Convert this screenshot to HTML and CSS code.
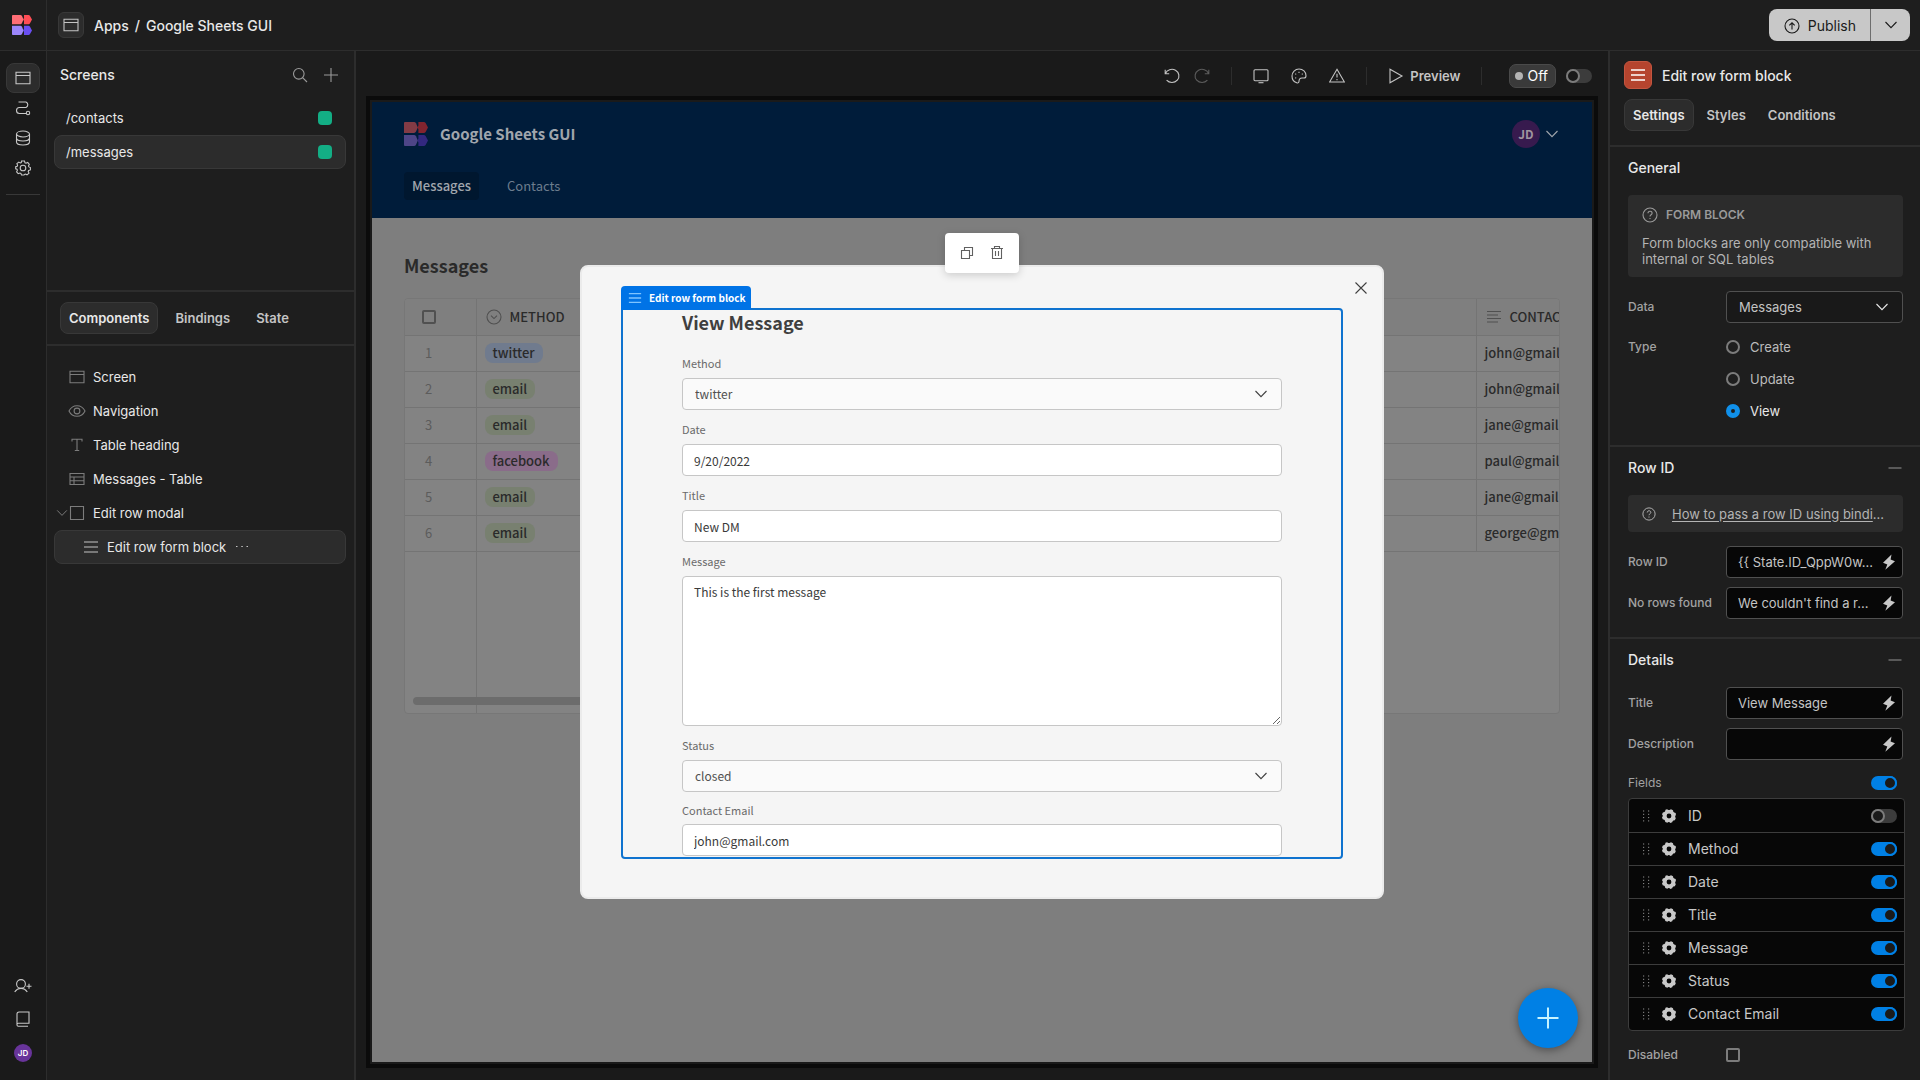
FILE: index.html
```html
<!DOCTYPE html>
<html lang="en">
<head>
<meta charset="utf-8">
<title>Google Sheets GUI</title>
<link rel="stylesheet" href="styles.css">
</head>
<body>
<svg class="sprite" aria-hidden="true">
  <symbol id="logo" viewBox="0 0 20 20">
    <path fill="var(--logo-a)" d="M0 .8Q0 0 .8 0H8.4Q9.400 0 10 1L11.500 4.500 10 8Q9.400 9.200 8.400 9.200H0z"/>
    <path fill="var(--logo-b)" d="M12 0H16.500Q17.500 0 18 .9L20 4.500 18 8.300Q17.500 9.200 16.500 9.200H12L12 6 11.200 4.500 12 3z"/>
    <path fill="var(--logo-c)" d="M0 10.800H8.400Q9.400 10.800 10 11.800L11.500 15.400 10 19Q9.400 20 8.400 20H.8Q0 20 0 19.200z"/>
    <path fill="var(--logo-d)" d="M12 10.800H16.500Q17.500 10.800 18 11.700L20 15.400 18 19.100Q17.500 20 16.500 20H12L12 17 11.200 15.400 12 13.800z"/>
  </symbol>
  <symbol id="window" viewBox="0 0 16 16"><path d="M1 2.300h14v11.500H1zM1 5.500h14"/></symbol>
  <symbol id="path" viewBox="0 0 16 16"><path d="M3.500 2H11a3 3 0 0 1 0 5.500H4.500a3 3 0 0 0 0 6H11"/><circle cx="13" cy="13" r="1.700"/></symbol>
  <symbol id="database" viewBox="0 0 16 16"><ellipse cx="8" cy="4" rx="6.500" ry="3"/><path d="M1.500 4v8c0 1.700 2.900 3 6.500 3s6.500-1.300 6.500-3V4M1.500 8c0 1.700 2.900 3 6.500 3s6.500-1.300 6.500-3"/></symbol>
  <symbol id="gear" viewBox="0 0 16 16"><circle cx="8" cy="8" r="2.800"/><path d="M6.500 1h3l.5 1.800 1 .4 1.700-.8 1.600 2-.8 1.500.4 1 1.500.6v2.400l-1.800.6-.4 1 .8 1.600-2 1.700-1.500-.8-1 .4L9 15H6.500l-.6-1.600-1-.4-1.700.7-1.600-1.900.8-1.600-.4-1L.7 8.800V6.700l1.500-.5.4-1L1.900 3.700l1.900-1.600 1.500.8 1-.4z"/></symbol>
  <symbol id="user-plus" viewBox="0 0 18 16"><circle cx="7" cy="6" r="4.400"/><path d="M.7 14C2 12 4 10.400 7 10.400s5 1.600 6.300 3.600M15 5.700v5M12.500 8.200h5"/></symbol>
  <symbol id="book" viewBox="0 0 16 16"><path d="M2 14.200V3a2 2 0 0 1 2-2h10v11.200H3.500A1.500 1.500 0 0 0 2 14a1.300 1.300 0 0 0 1.300 1.200H13"/></symbol>
  <symbol id="search" viewBox="0 0 16 16"><circle cx="6.800" cy="6.800" r="5.300"/><path d="M10.600 10.600 15 15"/></symbol>
  <symbol id="plus" viewBox="0 0 16 16"><path d="M8 1v14M1 8h14"/></symbol>
  <symbol id="eye" viewBox="0 0 18 16"><path d="M1 8c1.600-3.300 4.500-5.300 8-5.300S15.400 4.700 17 8c-1.600 3.300-4.500 5.300-8 5.300S2.600 11.300 1 8z"/><circle cx="9" cy="8" r="2.900"/></symbol>
  <symbol id="text" viewBox="0 0 16 16"><path d="M3 4.500V2.200h10v2.300M8 2.200v11.300M5.800 13.500h4.400"/></symbol>
  <symbol id="table" viewBox="0 0 16 16"><path d="M1 2.500h14v11H1zM1 6h14M1 9.800h14M5 6v7.500"/></symbol>
  <symbol id="box" viewBox="0 0 16 16"><path d="M1.500 1.500h13v13h-13z"/></symbol>
  <symbol id="lines" viewBox="0 0 16 16"><path d="M1 3h14M1 8h14M1 13h14"/></symbol>
  <symbol id="chevron" viewBox="0 0 16 16"><path d="M2.500 5 8 10.700 13.500 5"/></symbol>
  <symbol id="dots" viewBox="0 0 16 16"><path d="M2 7.500h1.500M7.300 7.500h1.500M12.500 7.500H14"/></symbol>
  <symbol id="undo" viewBox="0 0 16 16"><path d="M1.200 1.800v4h4M1.400 5.600a7 6.600 0 1 1 1.200 6.600"/></symbol>
  <symbol id="redo" viewBox="0 0 16 16"><path d="M14.800 1.800v4h-4M14.600 5.600a7 6.600 0 1 0-1.200 6.600"/></symbol>
  <symbol id="desktop" viewBox="0 0 16 16"><rect x="1" y="1.700" width="14" height="11" rx="1"/><path d="M5.500 14.700h5"/></symbol>
  <symbol id="palette" viewBox="0 0 16 16"><path d="M8 1a7 7 0 0 0-7 7c0 3.500 2.300 6 4.700 6.800 1.500.5 2.300-.5 2.300-1.500 0-2.200 1-3.300 3-3.300h2c1.300 0 2-.9 2-2.300C15 4 12 1 8 1z"/><path d="M8 3.700v1.200M4.300 5.800l.9.600M4.300 10.200l.9-.6M10.800 6.400l.9-.6"/></symbol>
  <symbol id="warning" viewBox="0 0 16 16"><path d="M8 1.300 15.400 14H.6zM8 5.800v3.700M8 11v1.200"/></symbol>
  <symbol id="play" viewBox="0 0 16 16"><path d="M2 1.200v13.600L14 8z"/></symbol>
  <symbol id="up-circle" viewBox="0 0 16 16"><circle cx="8" cy="8" r="7"/><path d="M8 11.500V5M5.300 7.400 8 4.800l2.700 2.600"/></symbol>
  <symbol id="help" viewBox="0 0 16 16"><circle cx="8" cy="8" r="7"/><path d="M6 6.300C6 3.600 10.100 3.700 10.100 6.200 10.100 7.800 8 7.700 8 9.400M8 10.900v1.200"/></symbol>
  <symbol id="minus" viewBox="0 0 16 16"><path d="M1.500 8h13"/></symbol>
  <symbol id="bolt" viewBox="0 0 12 16"><path d="M8.500.5 0 8.800l4.300 1.700L2.300 15.700 12 7.300 7.600 5.600z"/></symbol>
  <symbol id="grip" viewBox="0 0 8 12"><path d="M1 1h1.200M6 1h1.200M1 4.300h1.200M6 4.300h1.200M1 7.600h1.200M6 7.600h1.200M1 10.900h1.200M6 10.900h1.200"/></symbol>
  <symbol id="gear-solid" viewBox="0 0 14 14"><path fill-rule="evenodd" d="M5 .3 6.500 1h1L9 .3l2 .9.300 1.500.9.900 1.500.5.200 2-.7 1v.8l.6 1.300-1 2-1.400.2-.8.8L10.200 13.200 8.200 13.900 7.300 13h-.8l-1.200.8-2-.8-.4-1.500-.7-.7L.7 10.200 0 8.300l.8-1v-.7L0 5.300l.9-1.900 1.500-.4.7-.7L3.500.8zM7 4.600a2.400 2.400 0 1 0 0 4.800 2.400 2.400 0 0 0 0-4.800z"/></symbol>
  <symbol id="down-circle" viewBox="0 0 16 16"><circle cx="8" cy="8" r="7"/><path d="M5 6.700 8 9.600l3-2.900"/></symbol>
  <symbol id="align" viewBox="0 0 16 16"><path d="M1 2.500h14M1 6h11M1 9.500h14M1 13h11"/></symbol>
  <symbol id="copy" viewBox="0 0 14 14"><path d="M1.500 4.500h8v8h-8zM4.500 4.500v-3h8v8h-3"/></symbol>
  <symbol id="trash" viewBox="0 0 14 14"><path d="M1 2.500h12M2.500 2.500v10h9v-10M4.500 2.500V.5h5v2M5.500 5v5M8.500 5v5"/></symbol>
  <symbol id="close" viewBox="0 0 14 14"><path d="M1.500 1.500l11 11M12.500 1.500l-11 11"/></symbol>
</svg>

<header class="topbar">
  <a class="brand" href="#" aria-label="Home"><svg class="logo"><use href="#logo"/></svg></a>
  <nav class="crumbs">
    <span class="crumb-icon"><svg class="icon"><use href="#window"/></svg></span>
    <a href="#">Apps</a><span>/</span><a href="#">Google Sheets GUI</a>
  </nav>
  <div class="publish">
    <button class="publish-main"><svg class="icon"><use href="#up-circle"/></svg>Publish</button>
    <button class="publish-more" aria-label="More publish options"><svg class="icon"><use href="#chevron"/></svg></button>
  </div>
</header>

<div class="workspace">
  <nav class="rail">
    <button class="rail-item active" aria-label="Design"><svg class="icon"><use href="#window"/></svg></button>
    <button class="rail-item" aria-label="Automation"><svg class="icon"><use href="#path"/></svg></button>
    <button class="rail-item" aria-label="Data"><svg class="icon"><use href="#database"/></svg></button>
    <button class="rail-item" aria-label="Settings"><svg class="icon"><use href="#gear"/></svg></button>
    <hr class="rail-line">
    <div class="rail-foot">
      <button aria-label="Invite user"><svg class="icon wide"><use href="#user-plus"/></svg></button>
      <button aria-label="Docs"><svg class="icon"><use href="#book"/></svg></button>
      <span class="avatar small">JD</span>
    </div>
  </nav>

  <aside class="left">
    <section class="screens">
      <div class="screens-head">
        <h2>Screens</h2>
        <button aria-label="Search screens"><svg class="icon"><use href="#search"/></svg></button>
        <button aria-label="Add screen"><svg class="icon"><use href="#plus"/></svg></button>
      </div>
      <ul class="list">
        <li class="row"><a href="#">/contacts</a><i class="swatch"></i></li>
        <li class="row selected"><a href="#">/messages</a><i class="swatch"></i></li>
      </ul>
    </section>
    <div class="tabs left-tabs">
      <button class="tab active">Components</button><button class="tab">Bindings</button><button class="tab">State</button>
    </div>
    <ul class="list tree">
      <li class="row"><svg class="icon"><use href="#window"/></svg>Screen</li>
      <li class="row"><svg class="icon wide"><use href="#eye"/></svg>Navigation</li>
      <li class="row"><svg class="icon"><use href="#text"/></svg>Table heading</li>
      <li class="row"><svg class="icon"><use href="#table"/></svg>Messages - Table</li>
      <li class="row open"><svg class="icon caret"><use href="#chevron"/></svg><svg class="icon"><use href="#box"/></svg>Edit row modal</li>
      <li class="row child selected"><svg class="icon"><use href="#lines"/></svg>Edit row form block<svg class="icon more"><use href="#dots"/></svg></li>
    </ul>
  </aside>

  <main class="center">
    <div class="toolbar">
      <button aria-label="Undo"><svg class="icon"><use href="#undo"/></svg></button>
      <button class="off" aria-label="Redo"><svg class="icon"><use href="#redo"/></svg></button>
      <i class="sep"></i>
      <div class="tools">
        <button aria-label="Desktop"><svg class="icon"><use href="#desktop"/></svg></button>
        <button aria-label="Theme"><svg class="icon"><use href="#palette"/></svg></button>
        <button aria-label="Errors"><svg class="icon"><use href="#warning"/></svg></button>
      </div>
      <i class="sep"></i>
      <button class="preview-btn"><svg class="icon"><use href="#play"/></svg>Preview</button>
      <i class="sep last"></i>
      <label class="badge" for="live">Off</label>
      <input id="live" type="checkbox" class="switch">
    </div>

    <div class="canvas">
      <div class="app-nav">
        <div class="app-head">
          <svg class="logo"><use href="#logo"/></svg>
          <strong>Google Sheets GUI</strong>
          <span class="avatar">JD</span>
          <svg class="icon"><use href="#chevron"/></svg>
        </div>
        <nav class="app-links"><a class="current" href="#">Messages</a><a href="#">Contacts</a></nav>
      </div>
      <div class="app-body">
        <h1>Messages</h1>
        <div class="grid">
          <table>
            <colgroup><col class="c-num"><col><col><col><col><col><col></colgroup>
            <thead><tr>
              <th><input type="checkbox" class="tick" aria-label="Select all"></th>
              <th><span class="th"><svg class="icon"><use href="#down-circle"/></svg>METHOD</span></th>
              <th></th><th></th><th></th><th></th>
              <th><span class="th"><svg class="icon"><use href="#align"/></svg>CONTACT</span></th>
            </tr></thead>
            <tbody>
              <tr><td>1</td><td><span class="pill blue">twitter</span></td><td></td><td></td><td></td><td></td><td>john@gmail.com</td></tr>
              <tr><td>2</td><td><span class="pill">email</span></td><td></td><td></td><td></td><td></td><td>john@gmail.com</td></tr>
              <tr><td>3</td><td><span class="pill">email</span></td><td></td><td></td><td></td><td></td><td>jane@gmail.com</td></tr>
              <tr><td>4</td><td><span class="pill pink">facebook</span></td><td></td><td></td><td></td><td></td><td>paul@gmail.com</td></tr>
              <tr><td>5</td><td><span class="pill">email</span></td><td></td><td></td><td></td><td></td><td>jane@gmail.com</td></tr>
              <tr><td>6</td><td><span class="pill">email</span></td><td></td><td></td><td></td><td></td><td>george@gmail.com</td></tr>
            </tbody>
          </table>
          <div class="grid-rest"><i class="scrollbar"></i></div>
        </div>
      </div>

      <div class="modal-layer">
        <div class="modal" role="dialog" aria-label="View Message">
          <button class="close" aria-label="Close"><svg class="icon"><use href="#close"/></svg></button>
          <div class="float-tools">
            <button aria-label="Duplicate"><svg class="icon"><use href="#copy"/></svg></button>
            <button aria-label="Delete"><svg class="icon"><use href="#trash"/></svg></button>
          </div>
          <div class="block">
            <span class="block-tag"><svg class="icon"><use href="#lines"/></svg>Edit row form block</span>
            <form class="form">
              <h2>View Message</h2>
              <label for="method">Method</label>
              <span class="pick"><select id="method"><option>twitter</option></select><svg class="icon"><use href="#chevron"/></svg></span>
              <label for="date">Date</label>
              <input id="date" type="text" value="9/20/2022">
              <label for="title">Title</label>
              <input id="title" type="text" value="New DM">
              <label for="message">Message</label>
              <textarea id="message">This is the first message</textarea>
              <label for="status">Status</label>
              <span class="pick"><select id="status"><option>closed</option></select><svg class="icon"><use href="#chevron"/></svg></span>
              <label for="email">Contact Email</label>
              <input id="email" type="text" value="john@gmail.com">
            </form>
          </div>
        </div>
      </div>
      <button class="fab" aria-label="Add component"><svg class="icon"><use href="#plus"/></svg></button>
    </div>
  </main>

  <aside class="right">
    <div class="right-head">
      <div class="right-title"><span class="type-icon"><svg class="icon"><use href="#lines"/></svg></span><h2>Edit row form block</h2></div>
      <div class="tabs"><button class="tab active">Settings</button><button class="tab">Styles</button><button class="tab">Conditions</button></div>
    </div>

    <section class="group">
      <div class="group-head"><h3>General</h3></div>
      <div class="info">
        <h4><svg class="icon"><use href="#help"/></svg>FORM BLOCK</h4>
        <p>Form blocks are only compatible with internal or SQL tables</p>
      </div>
      <div class="prop"><label for="data">Data</label>
        <span class="pick"><select id="data"><option>Messages</option></select><svg class="icon"><use href="#chevron"/></svg></span></div>
      <div class="prop top" role="radiogroup" aria-labelledby="type-label"><span class="name" id="type-label">Type</span>
        <div class="radios">
          <label><input type="radio" name="type">Create</label>
          <label><input type="radio" name="type">Update</label>
          <label class="on"><input type="radio" name="type" checked>View</label>
        </div></div>
    </section>

    <section class="group">
      <div class="group-head"><h3>Row ID</h3><svg class="icon"><use href="#minus"/></svg></div>
      <div class="info tip"><svg class="icon"><use href="#help"/></svg><a href="#">How to pass a row ID using bindi</a>...</div>
      <div class="prop"><label for="rowid">Row ID</label>
        <span class="bind"><input id="rowid" type="text" value="{{ State.ID_QppW0w..."><svg class="icon"><use href="#bolt"/></svg></span></div>
      <div class="prop"><label for="norows">No rows found</label>
        <span class="bind"><input id="norows" type="text" value="We couldn't find a r..."><svg class="icon"><use href="#bolt"/></svg></span></div>
    </section>

    <section class="group">
      <div class="group-head"><h3>Details</h3><svg class="icon"><use href="#minus"/></svg></div>
      <div class="prop"><label for="ptitle">Title</label>
        <span class="bind"><input id="ptitle" type="text" value="View Message"><svg class="icon"><use href="#bolt"/></svg></span></div>
      <div class="prop"><label for="pdesc">Description</label>
        <span class="bind"><input id="pdesc" type="text"><svg class="icon"><use href="#bolt"/></svg></span></div>
      <div class="fields-head"><label for="allfields">Fields</label><input id="allfields" type="checkbox" class="switch" checked></div>
      <ul class="fields">
        <li><svg class="grip"><use href="#grip"/></svg><svg class="cog"><use href="#gear-solid"/></svg><label for="f1">ID</label><input id="f1" type="checkbox" class="switch"></li>
        <li><svg class="grip"><use href="#grip"/></svg><svg class="cog"><use href="#gear-solid"/></svg><label for="f2">Method</label><input id="f2" type="checkbox" class="switch" checked></li>
        <li><svg class="grip"><use href="#grip"/></svg><svg class="cog"><use href="#gear-solid"/></svg><label for="f3">Date</label><input id="f3" type="checkbox" class="switch" checked></li>
        <li><svg class="grip"><use href="#grip"/></svg><svg class="cog"><use href="#gear-solid"/></svg><label for="f4">Title</label><input id="f4" type="checkbox" class="switch" checked></li>
        <li><svg class="grip"><use href="#grip"/></svg><svg class="cog"><use href="#gear-solid"/></svg><label for="f5">Message</label><input id="f5" type="checkbox" class="switch" checked></li>
        <li><svg class="grip"><use href="#grip"/></svg><svg class="cog"><use href="#gear-solid"/></svg><label for="f6">Status</label><input id="f6" type="checkbox" class="switch" checked></li>
        <li><svg class="grip"><use href="#grip"/></svg><svg class="cog"><use href="#gear-solid"/></svg><label for="f7">Contact Email</label><input id="f7" type="checkbox" class="switch" checked></li>
      </ul>
      <div class="prop"><label for="disabled">Disabled</label><input id="disabled" type="checkbox" class="tick"></div>
    </section>
  </aside>
</div>
</body>
</html>
```
FILE: styles.css
```css
:root {
  --bg: #1e1e1e;
  --bg-deep: #1a1a1a;
  --line: #2d2d2d;
  --raised: #2c2c2c;
  --raised-line: #383838;
  --text: #e8e8e8;
  --muted: #c4c4c4;
  --label: #a2a2a2;
  --blue: #0080e5;
  --logo-a: #ff6e76;
  --logo-b: #ff4d55;
  --logo-c: #9c86fb;
  --logo-d: #6a4ff3;
}

*, *::before { box-sizing: border-box; }

body {
  margin: 0;
  height: 100vh;
  display: flex;
  flex-direction: column;
  overflow: hidden;
  background: var(--bg);
  color: var(--text);
  font: 400 14px/20px Inter, "Liberation Sans", sans-serif;
}

h1, h2, h3, h4, p, ul { margin: 0; padding: 0; list-style: none; font-weight: 500; font-size: 14px; }
a { color: inherit; text-decoration: none; }
button { margin: 0; padding: 0; border: 0; background: none; color: inherit; font: inherit; display: flex; align-items: center; justify-content: center; }
input, select, textarea { margin: 0; font: inherit; color: inherit; }

.sprite { position: absolute; width: 0; height: 0; }
.icon { width: 16px; height: 16px; flex: none; fill: none; stroke: currentColor; stroke-width: 1.100; }
.icon.wide { width: 18px; }

/* top bar */
.topbar { display: flex; align-items: center; height: 51px; flex: none; border-bottom: 1px solid var(--line); padding-right: 10px; }
.brand { width: 47px; height: 50px; padding-left: 12px; display: flex; align-items: center; border-right: 1px solid var(--line); }
.logo { width: 20px; height: 20px; flex: none; }
.crumbs { display: flex; align-items: center; gap: 6px; flex: 1; padding-left: 11px; font-weight: 500; line-height: 22px; }
.crumbs > :not(.crumb-icon) { padding-top: 2px; }
.crumb-icon { width: 26px; height: 26px; margin-right: 4px; display: grid; place-items: center; border: 1px solid var(--raised-line); border-radius: 6px; background: var(--raised); color: var(--muted); }
.publish { display: flex; height: 32px; border-radius: 8px; overflow: hidden; background: #c8c8c8; color: #1a1a1a; }
.publish-main { gap: 8px; padding: 1px 14px 0 15px; border-right: 1px solid #6e6e6e; }
.publish-more { width: 39px; }

.workspace { flex: 1; min-height: 0; display: flex; }

/* icon rail */
.rail { width: 47px; flex: none; display: flex; flex-direction: column; align-items: center; padding: 12px 0 18px; background: var(--bg-deep); border-right: 1px solid var(--line); color: #c8c8c8; }
.rail-item { width: 34px; height: 30px; border: 1px solid transparent; border-radius: 8px; }
.rail-item.active { background: var(--raised); border-color: var(--raised-line); }
.rail-line { width: 34px; margin: 11px 0 0; border: 0; border-top: 1px solid var(--raised-line); }
.rail-foot { margin-top: auto; display: flex; flex-direction: column; align-items: center; gap: 17px; }
.avatar { width: 28px; height: 28px; border-radius: 50%; display: grid; place-items: center; background: #371a4e; color: #a0949f; font: 700 12px/20px "Noto Sans CJK SC", sans-serif; }
.avatar.small { width: 18px; height: 18px; background: #68349a; color: #fff; font: 600 8px/18px Inter, sans-serif; }

/* left panel */
.left { width: 309px; flex: none; border-right: 2px solid var(--line); }
.screens { height: 241px; border-bottom: 2px solid var(--line); }
.screens-head { display: flex; align-items: center; gap: 15px; padding: 14px 15px 10px 13px; color: #9a9a9a; }
.screens-head h2 { flex: 1; color: var(--text); }
.list { padding: 6px 8px 6px 7px; font-size: 13px; font-weight: 400; }
.row { height: 34px; display: flex; align-items: center; gap: 8px; padding: 0 13px 0 11px; border: 1px solid transparent; border-radius: 8px; }
.row.selected { background: var(--raised); border-color: var(--raised-line); }
.row a { flex: 1; }
.swatch { width: 14px; height: 14px; border-radius: 4px; background: #13ae85; }
.tabs { display: flex; gap: 4px; }
.left-tabs { gap: 8px; padding: 10px 13px; border-bottom: 2px solid var(--line); }
.tab { height: 32px; padding: 0 8px; border: 1px solid transparent; border-radius: 8px; font-size: 13px; font-weight: 600; color: var(--muted); }
.tab.active { background: var(--raised); border-color: var(--raised-line); color: var(--text); }
.tree { padding-top: 14px; }
.tree .row { padding-left: 14px; }
.tree .row.open { padding-left: 0; gap: 0; }
.tree .row.open .icon + .icon { margin-right: 8px; }
.tree .row.child { padding-left: 28px; }
.tree .icon { color: #7c7c7c; }
.tree .icon.caret { width: 14px; }
.tree .wide { margin: 0 -1px; }
.tree .child .icon { color: var(--muted); }

/* centre */
.center { flex: 1; min-width: 0; display: flex; flex-direction: column; padding: 0 10px 12px; background: var(--bg-deep); }
.toolbar { height: 45px; padding: 5px 6px 0 0; display: flex; align-items: center; justify-content: flex-end; gap: 14px; color: var(--muted); }
.toolbar .off { color: #5c5c5c; }
.sep { width: 1px; height: 18px; background: var(--line); margin: 0 7px; }
.sep.last { margin-right: 13px; }
.tools { display: flex; gap: 22px; }
.preview-btn { gap: 6px; font-size: 13px; font-weight: 600; }
.badge { height: 24px; padding: 0 7px 0 5px; display: flex; align-items: center; gap: 4px; border: 1px solid #4a4a4a; border-radius: 7px; background: #3a3a3a; color: #fff; }
.badge::before { content: ""; width: 8px; height: 8px; border-radius: 50%; background: #b4b4b4; }
.badge + .switch { margin-left: -4px; }

.switch { appearance: none; width: 26px; height: 14px; flex: none; border-radius: 7px; background: #3c3c3c; display: flex; }
.switch::before { content: ""; width: 14px; height: 14px; border: 2px solid #7c7c7c; border-radius: 50%; background: #1a1a1a; }
.switch:checked { background: var(--blue); justify-content: flex-end; }
.switch:checked::before { border-color: var(--blue); }

.tick { appearance: none; width: 14px; height: 14px; border: 2px solid #7c7c7c; border-radius: 2px; }

/* app preview */
.canvas { flex: 1; min-height: 0; position: relative; display: flex; flex-direction: column; border: 4px solid #0b0b0b; padding: 2px; background: #7e7e7e content-box; font: 500 13px/20px "Noto Sans CJK SC", "Open Sans", sans-serif; --logo-a: #833b45; --logo-b: #82242f; --logo-c: #4e4587; --logo-d: #33287f; }
.app-nav { padding: 18px 32px; height: 116px; background: #001c3a; color: #a0a6ad; }
.app-head { display: flex; align-items: center; gap: 12px; height: 28px; }
.app-head .logo { width: 24px; height: 24px; }
.app-head strong { flex: 1; font-size: 15px; font-weight: 700; }
.app-head .avatar { margin-right: -8px; }
.app-links { display: flex; gap: 20px; margin-top: 24px; font-size: 13px; font-weight: 400; color: #6d7d8e; }
.app-links a { padding: 4px 8px; border-radius: 4px; }
.app-links .current { background: #00172f; color: #a0a6ad; font-weight: 500; }
.app-body { padding: 32px; color: #2a2a2a; }
.app-body h1 { font-size: 18px; line-height: 30px; font-weight: 700; }
.grid { margin-top: 18px; height: 416px; overflow: hidden; display: flex; flex-direction: column; border: 1px solid #777; border-radius: 4px; background: #838383; }
.grid table { width: 1271px; table-layout: fixed; border-collapse: collapse; flex: none; }
.c-num { width: 71px; }
.grid tr { height: 36px; }
.grid th, .grid td { padding: 0 8px; border-bottom: 1px solid #747474; text-align: left; font-weight: 500; }
.grid th { background: #7f7f7f; }
.grid th:first-child, .grid td:first-child { border-right: 1px solid #747474; padding: 0 0 0 17px; }
.grid td:first-child { color: #5c5c5c; font-weight: 400; padding-left: 20px; }
.grid th:last-child, .grid td:last-child { border-left: 1px solid #747474; }
.grid .tick { display: block; border-color: #505050; }
.th { display: flex; align-items: center; gap: 8px; padding-left: 1px; }
.th .icon { color: #505050; }
.pill { display: inline-block; height: 20px; padding: 0 8px; border-radius: 8px; background: #788070; }
.pill.blue { background: #707b8e; }
.pill.pink { background: #8a6c8a; }
.grid-rest { flex: 1; padding-left: 8px; display: flex; align-items: flex-end; padding-bottom: 8px; background: linear-gradient(#747474, #747474) 71px 0 / 1px 100% no-repeat; }
.scrollbar { width: 576px; height: 8px; border-radius: 4px; background: #6c6c6c; }

/* modal */
.modal-layer { position: absolute; inset: 2px; display: flex; align-items: center; justify-content: center; }
.modal { position: relative; width: 804px; max-width: 100%; height: 66%; display: flex; padding: 41px 39px 38px; border: 2px solid #ebebeb; border-radius: 8px; background: #f5f5f5; color: #3f3f3f; }
.close { position: absolute; top: 14px; right: 14px; }
.close .icon, .float-tools .icon { width: 14px; height: 14px; }
.float-tools { position: absolute; top: -34px; left: 50%; margin-left: -37px; width: 74px; height: 40px; display: flex; align-items: center; justify-content: center; gap: 16px; border-radius: 4px; background: #fff; color: #606060; box-shadow: 0 2px 8px rgba(0, 0, 0, .18); }
.block { position: relative; flex: 1; min-width: 0; display: flex; border: 2px solid #0f73cf; border-radius: 0 4px 4px 4px; }
.block-tag { position: absolute; left: -2px; bottom: 100%; height: 24px; padding: 0 5px 0 7px; display: flex; align-items: center; gap: 7px; border-radius: 4px 4px 0 0; background: #0073e6; color: #fff; font-size: 10px; font-weight: 700; white-space: nowrap; }
.block-tag .icon { width: 14px; height: 14px; stroke-width: 1.500; color: #7fc4ff; }
.form { flex: 1; min-width: 0; overflow: hidden; display: flex; flex-direction: column; padding: 0 59px; }
.form > * { flex: none; }
.form h2 { font-size: 18px; line-height: 24px; font-weight: 700; margin-bottom: 10px; }
.form > label { margin: 9px 0 5px; font-size: 11px; font-weight: 400; color: #6a6a6a; }
.form > label:last-of-type { margin: 8px 0 4px; }
.form input, .form textarea, .form select { width: 100%; height: 32px; padding: 0 11px; border: 1px solid #c6c6c6; border-radius: 4px; background: #fff; font-size: 12px; font-weight: 400; color: #3a3a3a; display: block; }
.form select { background: #fafafa; padding-left: 12px; color: #505050; }
.form textarea { height: 150px; padding: 5px 11px; resize: vertical; }
.pick, .bind { display: grid; align-items: center; }
.pick > *, .bind > * { grid-area: 1 / 1; }
.pick select { appearance: none; }
.pick .icon { width: 16px; height: 16px; justify-self: end; margin-right: 13px; pointer-events: none; }
.fab { position: absolute; right: 16px; bottom: 16px; width: 60px; height: 60px; border-radius: 50%; background: var(--blue); color: #c8f4ff; box-shadow: 0 2px 8px rgba(0, 0, 0, .4); }
.fab .icon { width: 24px; height: 24px; stroke-width: 1.300; }

/* right panel */
.right { width: 312px; flex: none; border-left: 2px solid var(--line); }
.right-head { padding: 10px 14px 14px; border-bottom: 2px solid var(--line); }
.right-title { display: flex; align-items: center; gap: 10px; margin-bottom: 10px; }
.right-title h2 { padding-top: 2px; }
.type-icon { width: 28px; height: 28px; display: grid; place-items: center; border-radius: 6px; background: #b5442e; color: #fff; border: 1px solid #c4553f; }
.type-icon .icon { stroke-width: 1.600; }
.group { padding: 0 17px 9px 18px; border-bottom: 2px solid var(--line); }
.group:last-child { border-bottom: 0; }
.group-head { display: flex; align-items: center; justify-content: space-between; padding: 11px 0 17px; color: #8a8a8a; }
.group-head h3 { color: var(--text); }
.info { padding: 10px 14px; margin-bottom: 14px; border-radius: 4px; background: var(--raised); color: #b4b4b4; }
.info h4 { display: flex; align-items: center; gap: 8px; font-size: 12px; font-weight: 600; color: #9a9a9a; margin-bottom: 10px; }
.info p { font-size: 13px; line-height: 16px; font-weight: 400; }
.tip { height: 37px; display: flex; align-items: center; font-size: 13px; }
.tip .icon { width: 14px; height: 14px; margin-right: 16px; }
.tip a { text-decoration: underline; text-underline-offset: 2px; white-space: nowrap; }
.prop { display: grid; grid-template-columns: 98px 1fr; align-items: center; margin-bottom: 9px; }
.prop.top { align-items: start; margin: 0; padding-top: 5px; }
.prop > label, .name, .fields-head label { font-size: 12px; font-weight: 500; color: var(--label); }
.right .pick select, .bind input { width: 100%; height: 32px; padding: 0 9px; border: 1px solid #505050; border-radius: 4px; background: #070707; font-size: 13px; color: var(--muted); }
.right .pick select { background: #191919; padding-left: 12px; }
.bind input { padding: 0 24px 0 11px; }
.bind .icon { width: 12px; height: 16px; justify-self: end; margin-right: 8px; fill: #c8c8c8; stroke: none; }
.radios { display: grid; gap: 12px; padding-bottom: 15px; font-size: 13px; color: #bcbcbc; }
.radios label { display: flex; align-items: center; gap: 10px; }
.radios .on { color: var(--text); }
.radios input { appearance: none; width: 14px; height: 14px; border: 2px solid #7c7c7c; border-radius: 50%; }
.radios input:checked { border: 5px solid #1090ea; }
.fields-head { display: flex; justify-content: space-between; align-items: center; padding: 4px 6px 5px 0; }
.fields-head label { font-weight: 400; }
.fields { margin-right: -2px; border: 1px solid #3c3c3c; border-radius: 4px; background: #070707; font-weight: 400; }
.fields li { height: 33px; display: flex; align-items: center; padding: 0 7px 0 13px; color: #c8c8c8; }
.fields li + li { border-top: 1px solid #3c3c3c; }
.fields label { flex: 1; }
.grip { width: 8px; height: 12px; margin-right: 12px; stroke: #909090; }
.cog { width: 14px; height: 14px; margin-right: 12px; fill: #c8c8c8; }
.fields + .prop { padding-top: 14px; }
```
